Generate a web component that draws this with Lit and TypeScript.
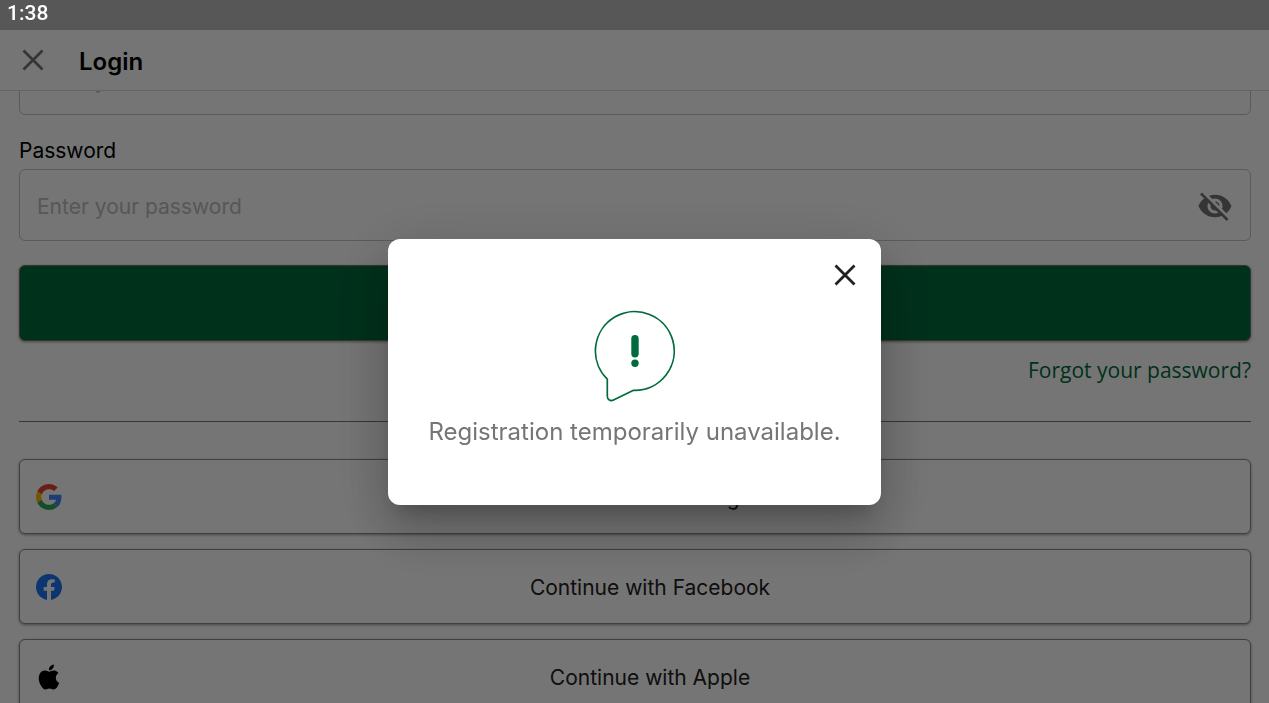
import { LitElement, html, css, svg } from "lit";
import { customElement, state, query } from "lit/decorators.js";

const closeIcon = svg`<svg class="icon" viewBox="0 0 24 24" width="24" height="24" aria-hidden="true">
  <path d="M2.5 2.5 21.5 21.5 M21.5 2.5 2.5 21.5" fill="none" stroke="currentColor" stroke-width="2.8"/>
</svg>`;

const eyeOffIcon = svg`<svg class="icon" viewBox="0 0 24 24" width="36" height="36" aria-hidden="true">
  <path fill="currentColor" d="M12 7c2.76 0 5 2.24 5 5 0 .65-.13 1.26-.36 1.83l2.92 2.92c1.51-1.26 2.7-2.89 3.43-4.75-1.73-4.39-6-7.5-11-7.5-1.4 0-2.74.25-3.98.7l2.16 2.16C10.74 7.13 11.35 7 12 7zM2 4.27l2.28 2.28.46.46C3.08 8.3 1.78 10.02 1 12c1.73 4.39 6 7.5 11 7.5 1.55 0 3.03-.3 4.38-.84l.42.42L19.73 22 21 20.73 3.27 3 2 4.27zM7.53 9.8l1.55 1.55c-.05.21-.08.43-.08.65 0 1.66 1.34 3 3 3 .22 0 .44-.03.65-.08l1.55 1.55c-.67.33-1.41.53-2.2.53-2.76 0-5-2.24-5-5 0-.79.2-1.53.53-2.2zm4.31-.78 3.15 3.15.02-.16c0-1.66-1.34-3-3-3l-.17.01z"/>
</svg>`;

const googleIcon = svg`<svg class="icon" viewBox="0 0 48 48" width="26" height="26" aria-hidden="true">
  <path fill="#EA4335" d="M24 9.5c3.54 0 6.71 1.22 9.21 3.6l6.85-6.85C35.9 2.38 30.47 0 24 0 14.62 0 6.51 5.38 2.56 13.22l7.98 6.19C12.43 13.72 17.74 9.5 24 9.5z"/>
  <path fill="#4285F4" d="M46.98 24.55c0-1.57-.15-3.09-.38-4.55H24v9.02h12.94c-.58 2.96-2.26 5.48-4.78 7.18l7.73 6c4.51-4.18 7.09-10.36 7.09-17.65z"/>
  <path fill="#FBBC05" d="M10.53 28.59c-.48-1.45-.76-2.99-.76-4.59s.27-3.14.76-4.59l-7.98-6.19C.92 16.46 0 20.12 0 24c0 3.88.92 7.54 2.56 10.78l7.97-6.19z"/>
  <path fill="#34A853" d="M24 48c6.48 0 11.93-2.13 15.89-5.81l-7.73-6c-2.15 1.45-4.92 2.3-8.16 2.3-6.26 0-11.57-4.22-13.47-9.91l-7.98 6.19C6.51 42.62 14.62 48 24 48z"/>
</svg>`;

const facebookIcon = svg`<svg class="icon" viewBox="0 0 24 24" width="26" height="26" aria-hidden="true">
  <path fill="#1877F2" d="M24 12.073c0-6.627-5.373-12-12-12s-12 5.373-12 12c0 5.99 4.388 10.954 10.125 11.854v-8.385H7.078v-3.47h3.047V9.43c0-3.007 1.792-4.669 4.533-4.669 1.312 0 2.686.235 2.686.235v2.953H15.83c-1.491 0-1.956.925-1.956 1.874v2.25h3.328l-.532 3.47h-2.796v8.385C19.612 23.027 24 18.062 24 12.073z"/>
</svg>`;

const appleIcon = svg`<svg class="icon" viewBox="0 0 24 24" width="26" height="26" aria-hidden="true">
  <path fill="#000" transform="translate(0.4 0.4) scale(0.965)" d="M12.152 6.896c-.948 0-2.415-1.078-3.96-1.04-2.04.027-3.91 1.183-4.961 3.014-2.117 3.675-.546 9.103 1.519 12.09 1.013 1.454 2.208 3.09 3.792 3.039 1.52-.065 2.09-.987 3.935-.987 1.831 0 2.35.987 3.96.948 1.637-.026 2.676-1.48 3.676-2.948 1.156-1.688 1.636-3.325 1.662-3.415-.039-.013-3.182-1.221-3.22-4.857-.026-3.04 2.48-4.494 2.597-4.559-1.429-2.09-3.623-2.324-4.39-2.376-2-.156-3.675 1.09-4.61 1.09zM15.53 3.83c.843-1.012 1.4-2.427 1.245-3.83-1.207.052-2.662.805-3.532 1.818-.78.896-1.454 2.338-1.273 3.714 1.338.104 2.715-.688 3.559-1.701"/>
</svg>`;

const alertIcon = svg`<svg class="icon" viewBox="0 0 82 92" width="82" height="92" aria-hidden="true">
  <path d="M13.3 69.2A39.4 39.4 0 1 1 41 80.4L39 80.4 20 89.8C16.4 91.6 13.3 90 13.3 86Z" fill="none" stroke="#006b3c" stroke-width="1.7" stroke-linejoin="round"/>
  <rect x="37.3" y="25" width="7.4" height="22.4" rx="3.7" fill="#006b3c"/>
  <circle cx="41" cy="53.3" r="3.7" fill="#006b3c"/>
</svg>`;

const providers = [
  { name: "Google", icon: googleIcon },
  { name: "Facebook", icon: facebookIcon },
  { name: "Apple", icon: appleIcon },
];

@customElement("app-root")
export class AppRoot extends LitElement {
  @state() private dialogOpen = true;
  @state() private showPassword = false;
  @query(".body") private body!: HTMLElement;

  static styles = css`
    :host {
      display: flex;
      flex-direction: column;
      height: 100vh;
      background: #fff;
      color: #000;
      font-family: Inter, "Liberation Sans", sans-serif;
      font-size: 21px;
      line-height: 28px;
    }
    * { box-sizing: border-box; }
    button, input { font: inherit; color: inherit; }
    button { cursor: pointer; }
    .icon { display: block; flex: none; }
    .status {
      flex: none;
      height: 30px;
      padding: 0 7px;
      background: #bdbdbd;
    }
    .time {
      position: relative;
      z-index: 2;
      display: block;
      color: #fff;
      font: 500 21px/26px Roboto, sans-serif;
    }
    .bar {
      flex: none;
      display: flex;
      align-items: center;
      gap: 22px;
      height: 61px;
      padding: 0 9px;
      border-bottom: 1px solid #dadada;
    }
    .title { margin: 0; padding-top: 4px; font-size: 24px; font-weight: 600; line-height: 32px; }
    .icon-button {
      display: grid;
      place-items: center;
      width: 48px;
      height: 48px;
      padding: 0;
      border: 0;
      background: none;
      color: #757575;
    }
    .body {
      flex: 1;
      min-height: 0;
      overflow-y: auto;
      scrollbar-width: none;
      padding: 16px 18px 16px 19px;
    }
    .label { display: block; margin-bottom: 4px; }
    .field {
      display: flex;
      align-items: center;
      height: 72px;
      margin-bottom: 22px;
      padding: 2px 11px 0 17px;
      border: 1px solid #c4c4c4;
      border-radius: 6px;
    }
    .field.last { margin-bottom: 24px; }
    .input {
      flex: 1;
      min-width: 0;
      padding: 1px 0 0;
      border: 0;
      outline: 0;
      background: none;
    }
    .input::placeholder { color: #bdbdbd; opacity: 1; }
    .submit {
      display: block;
      width: 100%;
      height: 76px;
      border: 1px solid #757575;
      border-radius: 6px;
      background: #006b3c;
      color: #fff;
      box-shadow: 0 1px 3px rgba(0, 0, 0, 0.4);
    }
    .forgot-row { display: flex; justify-content: flex-end; margin: 14px 0 36px; }
    .forgot {
      color: #006b3c;
      font-family: "Open Sans", "Noto Sans", sans-serif;
      line-height: 30px;
      text-decoration: none;
    }
    .rule { height: 1px; margin: 0 0 37px; border: 0; background: #757575; }
    .providers { display: grid; gap: 15px; }
    .provider {
      display: flex;
      align-items: center;
      gap: 4px;
      height: 75px;
      padding: 0 16px;
      border: 1px solid #8c8c8c;
      border-radius: 6px;
      background: #fff;
      color: #212121;
      box-shadow: 0 1px 3px rgba(0, 0, 0, 0.4);
    }
    .provider-name { flex: 1; padding-top: 2px; text-align: center; }
    .scrim {
      position: fixed;
      inset: 0;
      z-index: 1;
      display: grid;
      place-items: center;
      padding-top: 41px;
      background: rgba(0, 0, 0, 0.54);
    }
    .dialog {
      display: flex;
      flex-direction: column;
      align-items: center;
      padding: 12px 12px 58px;
      border-radius: 12px;
      background: #fff;
      box-shadow: 0 15px 20px -9px rgba(0, 0, 0, 0.2),
        0 32px 50px 4px rgba(0, 0, 0, 0.14), 0 12px 60px 10px rgba(0, 0, 0, 0.12);
    }
    .dismiss { align-self: flex-end; margin-bottom: 11px; color: #212121; }
    .message {
      margin: 15px 28px 0;
      color: #757575;
      font-size: 24px;
      line-height: 30px;
    }
  `;

  firstUpdated() {
    this.body.scrollTop = 64;
  }

  render() {
    return html`
      <div class="status"><time class="time">1:38</time></div>
      <header class="bar">
        <button class="icon-button" aria-label="Close">${closeIcon}</button>
        <h1 class="title">Login</h1>
      </header>
      <main class="body">
        <div class="field">
          <input class="input" type="email" aria-label="E-mail" placeholder="Enter your e-mail" />
        </div>
        <label class="label" for="password">Password</label>
        <div class="field last">
          <input
            class="input"
            id="password"
            type=${this.showPassword ? "text" : "password"}
            placeholder="Enter your password"
          />
          <button
            class="icon-button"
            aria-label="Show password"
            @click=${() => (this.showPassword = !this.showPassword)}
          >${eyeOffIcon}</button>
        </div>
        <button class="submit">Login</button>
        <div class="forgot-row"><a class="forgot" href="#">Forgot your password?</a></div>
        <hr class="rule" />
        <div class="providers">
          ${providers.map(
            (p) => html`<button class="provider">
              ${p.icon}<span class="provider-name">Continue with ${p.name}</span>
            </button>`,
          )}
        </div>
      </main>
      ${this.dialogOpen
        ? html`<div class="scrim">
            <section class="dialog" role="alertdialog" aria-modal="true" aria-labelledby="message">
              <button
                class="icon-button dismiss"
                aria-label="Dismiss"
                @click=${() => (this.dialogOpen = false)}
              >${closeIcon}</button>
              ${alertIcon}
              <p class="message" id="message">Registration temporarily unavailable.</p>
            </section>
          </div>`
        : null}
    `;
  }
}
